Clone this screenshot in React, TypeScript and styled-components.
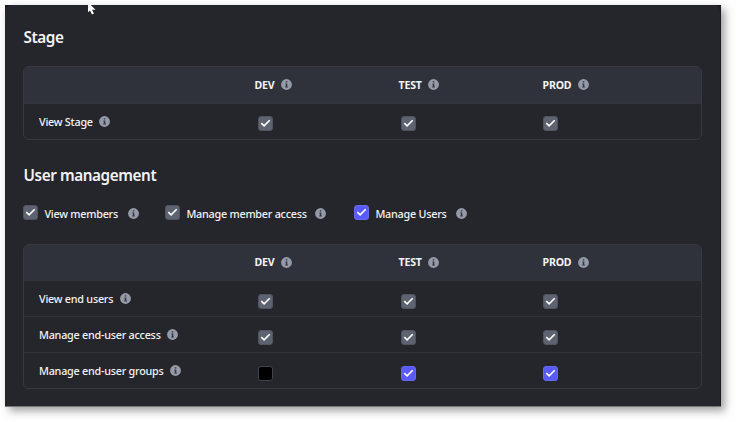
import React from 'react';
import styled, { createGlobalStyle } from 'styled-components';

const GlobalStyle = createGlobalStyle`
  * { box-sizing: border-box; }
  body {
    margin: 0;
    background: #fefefe;
    font-family: "Noto Sans", sans-serif;
    color: #f3f3f5;
    overflow: hidden;
  }
`;

const Page = styled.div`
  height: 422px;
  padding: 5px 15px 15px 5px;
`;

const Panel = styled.main`
  position: relative;
  height: 402px;
  background: #1b1b21;
  border-bottom: 1px solid #77777a;
  box-shadow: 4px 4px 8px rgba(0, 0, 0, 0.36);
`;

const Surface = styled.div`
  height: 401px;
  margin-right: 1px;
  padding: 21px 18px 0;
  border-radius: 6px 6px 0 0;
  background: #25262b;
`;

const Pointer = styled.svg`
  position: absolute;
  left: 83px;
  top: 0;
  width: 9px;
  height: 10px;
`;

const Title = styled.h2<{ $gap: number; $line?: number }>`
  margin: 0 0 ${(p) => p.$gap}px;
  padding-left: 0.5px;
  height: 22px;
  font-size: 15.3px;
  line-height: ${(p) => p.$line ?? 23}px;
  font-weight: 640;
  letter-spacing: -0.42px;
  white-space: nowrap;
`;

const Table = styled.section`
  width: 679px;
  border: 1px solid #373840;
  border-radius: 6px;
  overflow: hidden;

  & + ${Title} { margin-top: 24px; }
`;

const Head = styled.header<{ $height: number }>`
  display: grid;
  grid-template-columns: 230.5px 144px 144px 1fr;
  align-items: center;
  height: ${(p) => p.$height}px;
  padding-bottom: 1px;
  background: #30323b;
`;

const HeadCell = styled.div`
  display: flex;
  align-items: center;
  gap: 6.5px;
  font-size: 10.6px;
  line-height: 16px;
  font-weight: 660;
  letter-spacing: -0.2px;
`;

const Row = styled.div`
  display: grid;
  grid-template-columns: 234px 142.7px 142.7px 1fr;
  height: 36px;
  border-top: 1px solid #33343a;
`;

const Label = styled.div`
  display: flex;
  align-items: center;
  gap: 6.3px;
  height: 35px;
  padding-left: 15px;
  font-size: 10.8px;
  line-height: 16px;
  font-weight: 500;
  letter-spacing: -0.24px;
  white-space: nowrap;
`;

const BoxCell = styled.div<{ $top: number }>`
  padding-top: ${(p) => p.$top}px;
  height: 30px;
`;

const Options = styled.div`
  display: flex;
  align-items: center;
  height: 16px;
  margin-bottom: 23px;
`;

const Option = styled.label<{ $width: number }>`
  display: flex;
  align-items: center;
  width: ${(p) => p.$width}px;
  padding-left: 0.4px;
  font-size: 10.8px;
  line-height: 16px;
  font-weight: 500;
  letter-spacing: -0.24px;
  white-space: nowrap;
`;

const OptionText = styled.span<{ $width: number }>`
  width: ${(p) => p.$width}px;
  margin: 1px 0 0 6px;
`;

type State = 'locked' | 'on' | 'off';
const fills = { locked: '#5e6371', on: '#5a5af8', off: '#000000' };
const edges = { locked: '#51545f', on: '#6868ef', off: '#42434a' };

const Box = styled.span<{ $state: State }>`
  display: flex;
  flex: none;
  width: 15px;
  height: 15px;
  border: 1px solid ${(p) => edges[p.$state]};
  border-radius: 3px;
  background: ${(p) => fills[p.$state]};

  ${Option} > & {
    margin-top: -1px;
  }
`;

const InfoSvg = styled.svg`
  flex: none;
  width: 11px;
  height: 11px;
`;

const Check = ({ state }: { state: State }) => (
  <Box $state={state} role="checkbox" aria-checked={state !== 'off'}>
    {state !== 'off' && (
      <svg width="13" height="13" viewBox="0 0 13 13" fill="none">
        <path d="M2.3 6.2 5.1 8.9 10.7 3.2" stroke="#fff" strokeWidth="1.6" />
      </svg>
    )}
  </Box>
);

const Info = () => (
  <InfoSvg viewBox="0 0 11 11">
    <circle cx="5.5" cy="5.5" r="5.4" fill="#949aa8" />
    <path d="M4.8 2.2h1.5v1.4H4.8zM4.4 4.6h1.9v3h.6v1H4.2v-1h.6v-2h-.4z" fill="#353741" />
  </InfoSvg>
);

type MatrixProps = { rows: [string, State[]][]; headHeight: number; boxTop: number };

const Matrix = ({ rows, headHeight, boxTop }: MatrixProps) => (
  <Table>
    <Head $height={headHeight}>
      <span />
      {['DEV', 'TEST', 'PROD'].map((name) => (
        <HeadCell key={name}>{name}<Info /></HeadCell>
      ))}
    </Head>
    {rows.map(([name, states]) => (
      <Row key={name}>
        <Label>{name}<Info /></Label>
        {states.map((state, i) => (
          <BoxCell key={i} $top={boxTop}><Check state={state} /></BoxCell>
        ))}
      </Row>
    ))}
  </Table>
);

const options: [string, State, number, number][] = [
  ['View members', 'locked', 142, 84],
  ['Manage member access', 'locked', 189, 129],
  ['Manage Users', 'on', 130, 81],
];

const locked: State[] = ['locked', 'locked', 'locked'];

export default function App() {
  return (
    <Page>
      <GlobalStyle />
      <Panel>
        <Surface>
          <Title $gap={18} $line={22}>Stage</Title>
          <Matrix headHeight={36} boxTop={12} rows={[['View Stage', locked]]} />
          <Title $gap={19}>User management</Title>
          <Options>
            {options.map(([name, state, width, textWidth]) => (
              <Option key={name} $width={width}>
                <Check state={state} />
                <OptionText $width={textWidth}>{name}</OptionText>
                <Info />
              </Option>
            ))}
          </Options>
          <Matrix
            headHeight={35}
            boxTop={13}
            rows={[
              ['View end users', locked],
              ['Manage end-user access', locked],
              ['Manage end-user groups', ['off', 'on', 'on']],
            ]}
          />
        </Surface>
        <Pointer viewBox="0 0 9 10">
          <path d="M0 0v7.3l2-1.8 2 3.9 2-1-2-3.6h3.5L2.8 0z" fill="#fff" />
        </Pointer>
      </Panel>
    </Page>
  );
}
